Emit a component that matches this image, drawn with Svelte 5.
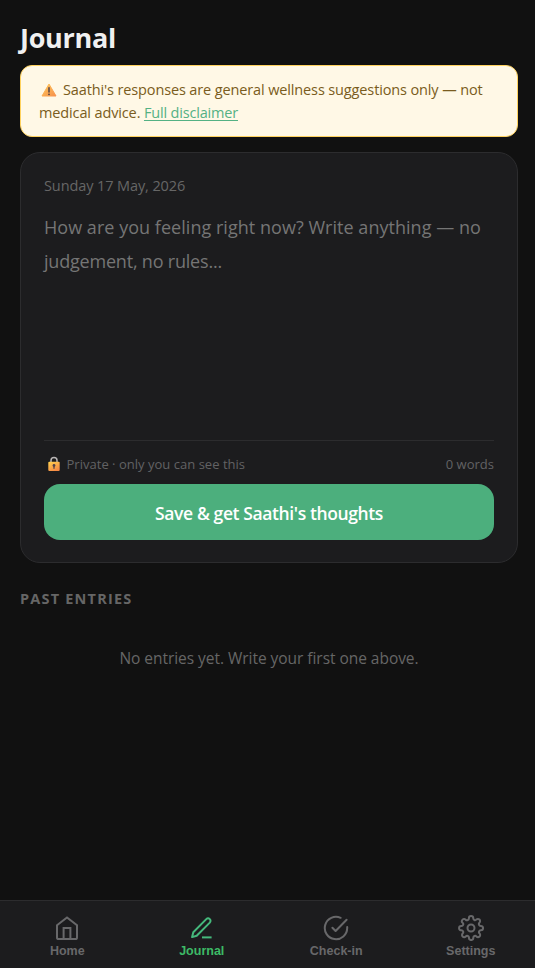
<script>
  const tabs = [
    { id: 'home', label: 'Home' },
    { id: 'journal', label: 'Journal' },
    { id: 'checkin', label: 'Check-in' },
    { id: 'settings', label: 'Settings' }
  ];
  let active = $state('journal');
</script>

<div class="app">
  <main>
    <h1>Journal</h1>

    <div class="notice">
      <svg class="warn" viewBox="0 0 16 14" aria-hidden="true">
        <defs>
          <linearGradient id="warnFill" x1="0" y1="0" x2="1" y2="1">
            <stop offset="0" stop-color="#ffc95a" />
            <stop offset="1" stop-color="#f6904c" />
          </linearGradient>
        </defs>
        <path d="M8 1 15 13H1Z" fill="url(#warnFill)" stroke="url(#warnFill)" stroke-width="1" stroke-linejoin="round" />
        <path d="M8 4.8V9" stroke="#50434a" stroke-width="1.5" stroke-linecap="round" />
        <circle cx="8" cy="11.3" r=".9" fill="#50434a" />
      </svg><span class="warning">Saathi's responses are general wellness suggestions only — not</span>
      <span>medical advice.</span> <a href="#disclaimer">Full disclaimer</a>
    </div>

    <section class="card">
      <div class="date">Sunday 17 May, 2026</div>
      <div class="editor">
        <span class="line first">How are you feeling right now? Write anything — no</span>
        <span class="line second">judgement, no rules...</span>
      </div>
      <div class="meta">
        <span class="private">
          <svg class="lock" viewBox="0 0 14 16" aria-hidden="true">
            <defs>
              <linearGradient id="lockFill" x1="0" y1="0" x2=".6" y2="1">
                <stop offset="0" stop-color="#ffd34f" />
                <stop offset="1" stop-color="#f58a45" />
              </linearGradient>
            </defs>
            <path d="M4 7V4.6a3 3 0 0 1 6 0V7" fill="none" stroke="#b8b5b5" stroke-width="1.5" />
            <rect x="1.3" y="5.8" width="11.4" height="9.2" rx="1" fill="url(#lockFill)" />
            <circle cx="7" cy="9.4" r="1.4" fill="#51414a" />
            <path d="M7 9.5v3.2" stroke="#51414a" stroke-width="1.3" />
          </svg>
          <span>Private · only you can see this</span>
        </span>
        <span class="count">0 words</span>
      </div>
      <button class="save">Save &amp; get Saathi's thoughts</button>
    </section>

    <h2>PAST ENTRIES</h2>
    <p class="empty">No entries yet. Write your first one above.</p>
  </main>

  <nav>
    {#each tabs as tab}
      <button class="tab" class:active={active === tab.id} onclick={() => (active = tab.id)}>
        <svg viewBox="0 0 26 26" fill="none" stroke="currentColor" stroke-width="2" stroke-linecap="round" stroke-linejoin="round" aria-hidden="true">
          {#if tab.id === 'home'}
            <path d="M3 10.2 13 2.4l10 7.8v12.3a1.6 1.6 0 0 1-1.6 1.6H4.6A1.6 1.6 0 0 1 3 22.5Z" stroke-linejoin="miter" />
            <path d="M9.6 24V13h6.8v11" stroke-linejoin="miter" />
          {:else if tab.id === 'journal'}
            <path d="M17.3 4.1a2.4 2.4 0 0 1 3.5 3.5L7.7 20.7l-4.6 1.4 1.2-4.9Z" />
            <path d="M13 22.4h9.6" stroke-linecap="butt" />
          {:else if tab.id === 'checkin'}
            <path d="M24.2 12v1A11.2 11.2 0 1 1 17.6 2.8" />
            <path d="M23.6 4.8 12.6 16 9.4 12.7" />
          {:else}
            <circle cx="13" cy="13" r="3.5" />
            <path d="M21.1 16.3a1.8 1.8 0 0 0 .36 2l.07.07a2.18 2.18 0 1 1-3.09 3.09l-.07-.07a1.8 1.8 0 0 0-3.05 1.29v.18a2.18 2.18 0 0 1-4.36 0v-.1a1.8 1.8 0 0 0-3.15-1.28l-.07.07a2.18 2.18 0 1 1-3.09-3.09l.07-.07a1.8 1.8 0 0 0-1.29-3.05h-.18a2.18 2.18 0 0 1 0-4.36h.1A1.8 1.8 0 0 0 4.62 7.8l-.07-.07a2.18 2.18 0 1 1 3.09-3.09l.07.07a1.8 1.8 0 0 0 2 .36h.09a1.8 1.8 0 0 0 1.09-1.65v-.18a2.18 2.18 0 0 1 4.36 0v.1a1.8 1.8 0 0 0 3.05 1.28l.07-.07a2.18 2.18 0 1 1 3.09 3.09l-.07.07a1.8 1.8 0 0 0-.36 2v.09a1.8 1.8 0 0 0 1.65 1.09h.18a2.18 2.18 0 0 1 0 4.36h-.1a1.8 1.8 0 0 0-1.65 1.09Z" />
          {/if}
        </svg>
        <span>{tab.label}</span>
      </button>
    {/each}
  </nav>
</div>

<style>
  :global(body) {
    background: #111111;
  }
  .app {
    box-sizing: border-box;
    height: 968px;
    overflow: hidden;
    display: flex;
    flex-direction: column;
    background: #111111;
    font-family: 'Open Sans', 'Noto Sans', sans-serif;
    color: #666;
  }
  main {
    flex: 1;
    padding: 20px 17px 0 20px;
  }
  h1 {
    margin: 0 0 9px;
    font-size: 27px;
    line-height: 36px;
    font-weight: 700;
    letter-spacing: -0.28px;
    color: #f0f0f0;
  }
  .notice {
    box-sizing: border-box;
    height: 72px;
    padding: 12px 18px;
    border: 1px solid #ffd25e;
    border-radius: 12px;
    background: #fff8e6;
    color: #7a5c20;
    font-size: 14.5px;
    line-height: 23px;
    letter-spacing: -0.13px;
    white-space: nowrap;
  }
  .warning::after {
    content: '\A';
    white-space: pre;
  }
  .warn {
    width: 16px;
    height: 14px;
    margin: 0 6px 0 2px;
    vertical-align: -2px;
  }
  a {
    color: #54b184;
    text-underline-offset: 2px;
    letter-spacing: -0.18px;
  }
  .card {
    box-sizing: border-box;
    height: 411px;
    margin-top: 15px;
    padding: 23px 23px 22px;
    border: 1px solid #2c2c2e;
    border-radius: 20px;
    background: #1c1c1e;
    display: flex;
    flex-direction: column;
  }
  .date {
    font-size: 14.5px;
    line-height: 20px;
    letter-spacing: -0.1px;
    color: #666;
  }
  .editor {
    flex: 1;
    margin-top: 14px;
    font-size: 18px;
    line-height: 34px;
    color: #757575;
    white-space: nowrap;
  }
  .line {
    display: block;
  }
  .first {
    letter-spacing: 0.035px;
  }
  .second {
    letter-spacing: -0.2px;
  }
  .meta {
    height: 43px;
    border-top: 1px solid #2c2c2e;
    display: flex;
    justify-content: space-between;
    align-items: center;
    padding-top: 3px;
    box-sizing: border-box;
    margin-bottom: 1px;
    font-size: 13px;
    letter-spacing: 0.02px;
    color: #626264;
  }
  .private {
    display: flex;
    align-items: center;
  }
  .lock {
    width: 14px;
    height: 16px;
    margin: 0 6px 0 2.5px;
  }
  .save {
    height: 56px;
    border: 0;
    border-radius: 16px;
    padding: 1px 0 0;
    background: #4caf7d;
    color: #fff;
    font: 600 17.5px 'Open Sans', sans-serif;
    letter-spacing: -0.39px;
  }
  h2 {
    margin: 26px 0 0;
    font-size: 14.5px;
    line-height: 20px;
    font-weight: 700;
    letter-spacing: 1.2px;
    color: #666;
  }
  .empty {
    margin: 38px 0 0;
    text-align: center;
    font-size: 15.5px;
    line-height: 22px;
    letter-spacing: -0.04px;
    color: #666;
  }
  nav {
    box-sizing: border-box;
    height: 68px;
    border-top: 1px solid #2c2c2e;
    background: #1c1c1e;
    display: grid;
    grid-template-columns: repeat(4, 134.5px);
  }
  .tab {
    border: 0;
    padding: 14px 0 0;
    background: none;
    color: #68686a;
    display: flex;
    flex-direction: column;
    align-items: center;
    gap: 3px;
    font: 700 12.5px/15px 'Liberation Sans', Arial, sans-serif;
    letter-spacing: 0;
  }
  .tab svg {
    width: 26px;
    height: 26px;
  }
  .active {
    color: #45b97c;
  }
  .active span {
    color: #3dba66;
  }
</style>
